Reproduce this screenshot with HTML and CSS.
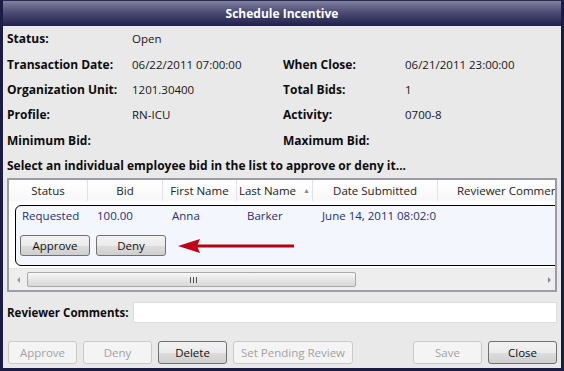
FILE: index.html
```html
<!DOCTYPE html>
<html lang="en">
<head>
    <meta charset="UTF-8">
    <title>Schedule Incentive</title>
    <link rel="stylesheet" href="styles.css">
</head>
<body>
    <div class="window">
        <div class="titlebar">Schedule Incentive</div>
        <div class="content">
            <div class="info">
                <span class="label">Status:</span><span>Open</span><span></span><span></span>
                <span class="label">Transaction Date:</span><span>06/22/2011 07:00:00</span>
                <span class="label">When Close:</span><span>06/21/2011 23:00:00</span>
                <span class="label">Organization Unit:</span><span>1201.30400</span>
                <span class="label">Total Bids:</span><span>1</span>
                <span class="label">Profile:</span><span>RN-ICU</span>
                <span class="label">Activity:</span><span>0700-8</span>
                <span class="label">Minimum Bid:</span><span></span>
                <span class="label">Maximum Bid:</span><span></span>
                <span class="label hint">Select an individual employee bid in the list to approve or deny it...</span>
            </div>

            <div class="grid">
                <div class="grid-head">
                    <div class="col c-status">Status</div>
                    <div class="col c-bid">Bid</div>
                    <div class="col c-first">First Name</div>
                    <div class="col c-last">Last Name <span class="sort">&#9650;</span></div>
                    <div class="col c-date">Date Submitted</div>
                    <div class="col c-rev">Reviewer Comments</div>
                </div>
                <div class="grid-body">
                    <div class="detail">
                        <div class="detail-row">
                            <span class="d-status">Requested</span>
                            <span class="d-bid">100.00</span>
                            <span class="d-first">Anna</span>
                            <span class="d-last">Barker</span>
                            <span class="d-date">June 14, 2011 08:02:0</span>
                        </div>
                        <div class="detail-actions">
                            <button class="btn small">Approve</button>
                            <button class="btn small">Deny</button>
                            <svg class="arrow" width="120" height="16" viewBox="0 0 120 16">
                                <polygon points="0,8 22,1 19,8 22,15" fill="#c00018"/>
                                <rect x="18" y="6.5" width="98" height="3" fill="#b40016"/>
                            </svg>
                        </div>
                    </div>
                </div>
                <div class="hscroll">
                    <span class="tri left"></span>
                    <div class="thumb"><span class="grip"></span></div>
                    <span class="tri right"></span>
                </div>
            </div>

            <div class="comments">
                <span class="label">Reviewer Comments:</span>
                <div class="textbox"></div>
            </div>

            <div class="actions">
                <button class="btn" disabled>Approve</button>
                <button class="btn" disabled>Deny</button>
                <button class="btn">Delete</button>
                <button class="btn wide" disabled>Set Pending Review</button>
                <div class="spacer"></div>
                <button class="btn" disabled>Save</button>
                <button class="btn">Close</button>
            </div>
        </div>
    </div>
</body>
</html>
```

FILE: styles.css
```css
body {
    margin: 0;
    font-family: "Open Sans", "Noto Sans", sans-serif;
    font-size: 11.5px;
    color: #161616;
}
.window {
    width: 564px;
    height: 371px;
    box-sizing: border-box;
    border: 3px solid #1b1b45;
    border-top: none;
    background-color: #e9e9e9;
    overflow: hidden;
}
.titlebar {
    height: 26px;
    line-height: 25px;
    margin: 0 -3px;
    text-align: center;
    color: #fff;
    font-weight: bold;
    font-size: 12px;
    background: linear-gradient(#80809e, #4c4c76 45%, #20204a);
    border-top: 1px solid #2a2a55;
    box-sizing: border-box;
}
.content {
    padding: 0 4px;
}
.info {
    display: grid;
    grid-template-columns: 125px 151px 122px 1fr;
    grid-auto-rows: 25.4px;
    align-items: center;
}
.label {
    font-weight: bold;
    font-size: 12px;
    color: #0c0c0c;
    white-space: nowrap;
}
.hint {
    grid-column: 1 / -1;
}
.grid {
    height: 114px;
    box-sizing: border-box;
    border: 2px solid #9c9ca6;
    background-color: #fff;
    display: flex;
    flex-direction: column;
}
.grid-head {
    height: 21px;
    display: flex;
    background: linear-gradient(#ffffff, #f7f7f7);
    flex-shrink: 0;
}
.col {
    line-height: 21px;
    text-align: center;
    border-right: 1px solid #e2e3ea;
    white-space: nowrap;
    overflow: hidden;
    color: #222;
}
.c-status { width: 78px; }
.c-bid { width: 74px; }
.c-first { width: 73px; }
.c-last { width: 75px; }
.c-date { width: 124px; }
.c-rev { flex: 1; border-right: none; padding-left: 19px; text-align: left; }
.sort {
    font-size: 7px;
    color: #8a8a8a;
    margin-left: 4px;
    vertical-align: 2px;
}
.grid-body {
    height: 67px;
    overflow: hidden;
    padding: 4px 0 0 6px;
    box-sizing: border-box;
}
.detail {
    width: 560px;
    height: 61px;
    box-sizing: border-box;
    border: 1px solid #000;
    border-radius: 6px;
    background-color: #f3f7fd;
}
.detail-row {
    display: flex;
    height: 19px;
    line-height: 19px;
    color: #1e2f78;
}
.detail-row span {
    width: 75px;
    flex-shrink: 0;
}
.detail-row .d-status { width: 75px; padding-left: 6px; }
.detail-row .d-date { width: 200px; }
.detail-actions {
    display: flex;
    align-items: center;
    gap: 6px;
    margin-top: 10px;
    padding-left: 4px;
}
.arrow {
    margin-left: 6px;
}
.btn {
    font-family: inherit;
    font-size: 11.5px;
    color: #111;
    height: 23px;
    width: 69px;
    padding: 0;
    border: 1px solid #707070;
    border-radius: 3px;
    background: linear-gradient(#f2f2f2 0%, #ebebeb 50%, #dddddd 51%, #cfcfcf 100%);
}
.btn.small {
    height: 21px;
    width: 70px;
}
.btn.wide {
    width: 120px;
}
.btn:disabled {
    color: #a2a2a2;
    border-color: #c9c9c9;
    background: #f4f4f4;
}
.hscroll {
    height: 21px;
    display: flex;
    align-items: center;
    background-color: #eeeeee;
    border-top: 1px solid #e4e4e4;
    flex-shrink: 0;
}
.tri {
    width: 0;
    height: 0;
    border-top: 3px solid transparent;
    border-bottom: 3px solid transparent;
}
.tri.left {
    border-right: 3px solid #9a9a9a;
    margin: 0 7px 0 8px;
}
.tri.right {
    border-left: 3px solid #8a8a8a;
    margin: 0 4px 0 auto;
}
.thumb {
    width: 329px;
    height: 15px;
    box-sizing: border-box;
    border: 1px solid #a8a8a8;
    border-radius: 2px;
    background: linear-gradient(#f7f7f7, #e6e6e6 50%, #d8d8d8);
    display: flex;
    justify-content: center;
    align-items: center;
}
.grip {
    width: 5px;
    height: 6px;
    border-left: 1px solid #555;
    border-right: 1px solid #555;
    position: relative;
    margin-left: 4px;
}
.grip::after {
    content: "";
    position: absolute;
    left: 2px;
    top: 0;
    width: 1px;
    height: 6px;
    background-color: #555;
}
.comments {
    display: flex;
    align-items: center;
    margin-top: 10px;
}
.comments .label {
    width: 126px;
    flex-shrink: 0;
    font-size: 11.5px;
}
.textbox {
    flex: 1;
    height: 21px;
    box-sizing: border-box;
    background-color: #fff;
    border: 1px solid #dcdcdc;
}
.actions {
    display: flex;
    gap: 6px;
    margin-top: 18px;
    padding-left: 1px;
}
.spacer {
    flex: 1;
}
```
